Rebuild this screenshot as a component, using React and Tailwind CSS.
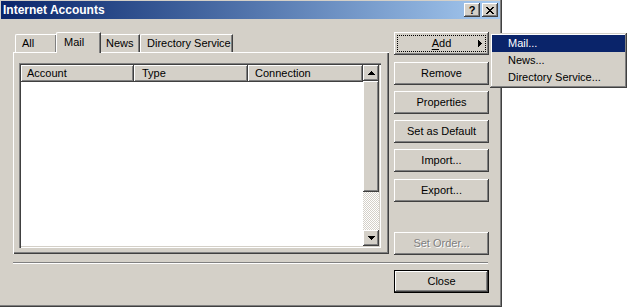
import React from "react";

const raised =
  "shadow-[inset_-1px_-1px_#404040,inset_1px_1px_#ffffff,inset_-2px_-2px_#808080,inset_2px_2px_#d4d0c8]";

function Btn({ children, className = "", disabled = false }) {
  return (
    <div
      className={`flex items-center justify-center w-[95px] h-[23px] bg-[#d4d0c8] shadow-[inset_-1px_-1px_#404040,inset_1px_1px_#ffffff,inset_-2px_-2px_#808080,inset_2px_2px_#d4d0c8] ${
        disabled ? "text-[#808080] [text-shadow:1px_1px_#ffffff]" : "text-black"
      } ${className}`}
    >
      {children}
    </div>
  );
}

function ArrowDown() {
  return (
    <svg width="7" height="4" viewBox="0 0 7 4" className="block">
      <path d="M0 0h7v1H0z M1 1h5v1H1z M2 2h3v1H2z M3 3h1v1H3z" fill="#000" />
    </svg>
  );
}
function ArrowUp() {
  return (
    <svg width="7" height="4" viewBox="0 0 7 4" className="block">
      <path d="M3 0h1v1H3z M2 1h3v1H2z M1 2h5v1H1z M0 3h7v1H0z" fill="#000" />
    </svg>
  );
}
function ArrowRight() {
  return (
    <svg width="4" height="7" viewBox="0 0 4 7" className="block">
      <path d="M0 0h1v7H0z M1 1h1v5H1z M2 2h1v3H2z M3 3h1v1H3z" fill="#000" />
    </svg>
  );
}
function CloseX() {
  return (
    <svg width="8" height="7" viewBox="0 0 8 7" className="block">
      <path
        d="M0 0h2v1H0z M6 0h2v1H6z M1 1h2v1H1z M5 1h2v1H5z M2 2h4v1H2z M3 3h2v1H3z M2 4h4v1H2z M1 5h2v1H1z M5 5h2v1H5z M0 6h2v1H0z M6 6h2v1H6z"
        fill="#000"
      />
    </svg>
  );
}

export default function App() {
  return (
    <div className="relative w-[627px] h-[308px] bg-white overflow-hidden font-['Liberation_Sans',Arial,sans-serif] text-[11px] leading-none text-black">
      {/* Window */}
      <div className="w-[502px] h-[307px] bg-[#d4d0c8] flex flex-col pt-[1px] pl-[1px] pr-[2px] shadow-[inset_-1px_-1px_#404040,inset_-2px_-2px_#808080]">
        {/* Title bar */}
        <div className="h-[18px] flex items-center pl-[2px] pr-[2px] bg-gradient-to-r from-[#0a246a] to-[#a6caf0]">
          <div className="flex-1 text-white font-bold text-[12px]">Internet Accounts</div>
          <div className="flex items-center gap-[2px]">
            <div className="w-[16px] h-[14px] bg-[#d4d0c8] flex items-center justify-center font-bold text-[11px] shadow-[inset_-1px_-1px_#404040,inset_1px_1px_#ffffff,inset_-2px_-2px_#808080,inset_2px_2px_#d4d0c8]">
              ?
            </div>
            <div className="w-[16px] h-[14px] bg-[#d4d0c8] flex items-center justify-center shadow-[inset_-1px_-1px_#404040,inset_1px_1px_#ffffff,inset_-2px_-2px_#808080,inset_2px_2px_#d4d0c8]">
              <CloseX />
            </div>
          </div>
        </div>

        {/* Content */}
        <div className="flex-1 flex flex-col pl-[12px] pt-[13px]">
          <div className="flex h-[223px]">
            {/* Left: tabs + panel */}
            <div className="w-[376px] flex flex-col">
              <div className="h-[20px] flex items-end pl-[2px] relative z-10">
                <div className="w-[41px] h-[18px] pl-[6px] flex items-center border-t border-l border-white rounded-tl-[2px] shadow-[inset_-1px_0_#808080]">
                  All
                </div>
                <div className="w-[45px] h-[21px] -mb-[1px] pl-[7px] pb-[1px] flex items-center bg-[#d4d0c8] border-t border-l border-white border-r border-r-[#404040] rounded-tl-[2px] shadow-[inset_-1px_0_#808080]">
                  Mail
                </div>
                <div className="w-[39px] h-[18px] pl-[5px] flex items-center border-t border-r border-t-white border-r-[#404040] shadow-[inset_-1px_0_#808080]">
                  News
                </div>
                <div className="w-[93px] h-[18px] pl-[6px] flex items-center border-t border-l border-r border-t-white border-l-white border-r-[#404040] rounded-tl-[2px] shadow-[inset_-1px_0_#808080]">
                  Directory Service
                </div>
              </div>
              <div className="h-[202px] border-t border-l border-white pl-[5px] pt-[10px] shadow-[inset_-1px_-1px_#404040,inset_-2px_-2px_#808080]">
                {/* List view */}
                <div className="w-[362px] h-[185px] p-[2px] bg-white flex shadow-[inset_1px_1px_#808080,inset_2px_2px_#404040,inset_-1px_-1px_#ffffff,inset_-2px_-2px_#d4d0c8]">
                  <div className="flex-1 flex flex-col">
                    <div className="flex h-[17px]">
                      <div className="w-[113px] h-full pl-[6px] flex items-center bg-[#d4d0c8] shadow-[inset_-1px_-1px_#404040,inset_1px_1px_#ffffff,inset_-2px_-2px_#808080]">
                        Account
                      </div>
                      <div className="w-[114px] h-full pl-[8px] flex items-center bg-[#d4d0c8] shadow-[inset_-1px_-1px_#404040,inset_1px_1px_#ffffff,inset_-2px_-2px_#808080]">
                        Type
                      </div>
                      <div className="w-[115px] h-full pl-[7px] flex items-center bg-[#d4d0c8] shadow-[inset_-1px_-1px_#404040,inset_1px_1px_#ffffff,inset_-2px_-2px_#808080]">
                        Connection
                      </div>
                    </div>
                    <div className="flex-1 bg-white" />
                  </div>
                  <div className="w-[16px] flex flex-col">
                    <div className={`h-[16px] bg-[#d4d0c8] flex items-center justify-center ${raised}`}>
                      <ArrowUp />
                    </div>
                    <div className={`h-[111px] bg-[#d4d0c8] ${raised}`} />
                    <div className="flex-1 bg-[repeating-conic-gradient(#d4d0c8_0_25%,#ffffff_0_50%)] bg-[length:2px_2px]" />
                    <div className={`h-[16px] bg-[#d4d0c8] flex items-center justify-center ${raised}`}>
                      <ArrowDown />
                    </div>
                  </div>
                </div>
              </div>
            </div>

            {/* Right: buttons */}
            <div className="ml-[5px] w-[95px] flex flex-col">
              <Btn className="relative">
                <div className="absolute inset-[3px] border border-dotted border-black" />
                <span>
                  <span className="underline underline-offset-[2px]">A</span>dd
                </span>
                <div className="absolute right-[7px] top-[8px]">
                  <ArrowRight />
                </div>
              </Btn>
              <Btn className="mt-[7px]">Remove</Btn>
              <Btn className="mt-[6px]">Properties</Btn>
              <Btn className="mt-[6px]">Set as Default</Btn>
              <Btn className="mt-[6px]">Import...</Btn>
              <Btn className="mt-[7px]">Export...</Btn>
              <Btn className="mt-[30px]" disabled>
                Set Order...
              </Btn>
            </div>
          </div>

          {/* Separator */}
          <div className="mt-[7px] w-[475px] h-[2px] border-t border-t-[#808080] border-b border-b-white" />

          {/* Close row */}
          <div className="mt-[6px] pl-[381px]">
            <div className="w-[95px] h-[23px] border border-black bg-[#d4d0c8] flex items-center justify-center shadow-[inset_-1px_-1px_#404040,inset_1px_1px_#ffffff,inset_-2px_-2px_#808080]">
              Close
            </div>
          </div>
        </div>
      </div>

      {/* Popup menu */}
      <div className="absolute left-[490px] top-[33px] w-[137px] h-[55px] p-[2px] bg-[#d4d0c8] shadow-[inset_-1px_-1px_#404040,inset_1px_1px_#d4d0c8,inset_-2px_-2px_#808080,inset_2px_2px_#ffffff]">
        <div className="h-[17px] pl-[16px] flex items-center bg-[#0a246a] text-white">Mail...</div>
        <div className="h-[17px] pl-[16px] flex items-center">News...</div>
        <div className="h-[17px] pl-[16px] flex items-center">Directory Service...</div>
      </div>
    </div>
  );
}
